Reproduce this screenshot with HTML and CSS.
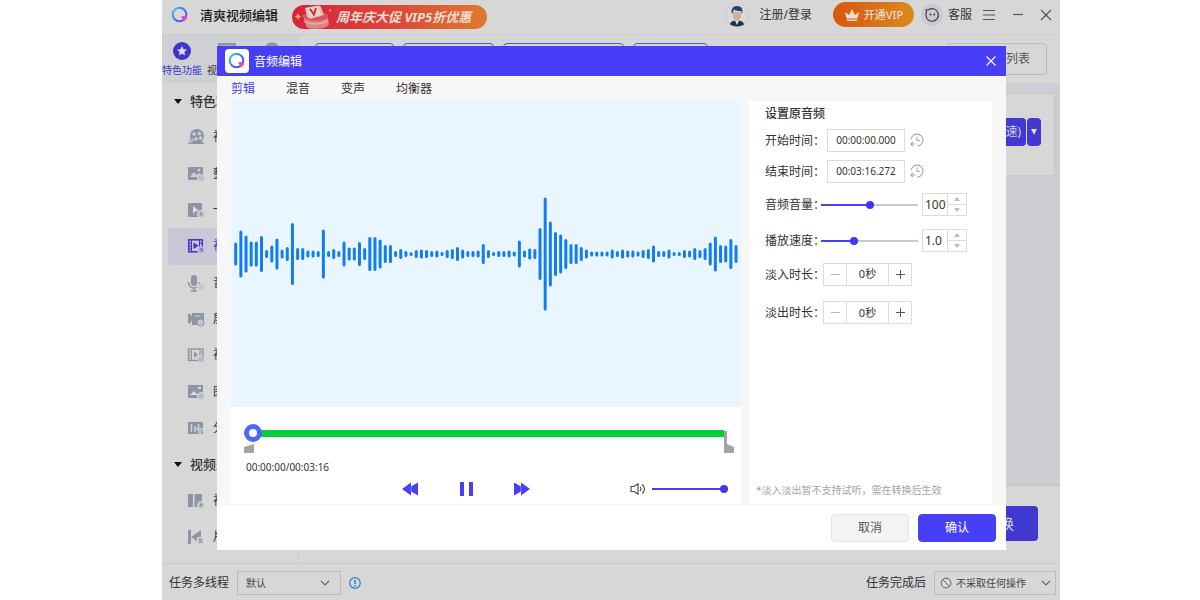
FILE: index.html
```html
<!DOCTYPE html>
<html lang="zh-CN">
<head>
<meta charset="utf-8">
<title>清爽视频编辑</title>
<link rel="stylesheet" href="styles.css">
</head>
<body>
<svg class="defs" width="0" height="0" aria-hidden="true">
  <defs>
    <linearGradient id="ring" x1="0" y1="0" x2="1" y2="1">
      <stop offset="0" stop-color="#3fd0f5"/><stop offset=".5" stop-color="#3f74f2"/><stop offset="1" stop-color="#7a3df0"/>
    </linearGradient>
    <linearGradient id="flare" x1="0" y1="0" x2="1" y2="1">
      <stop offset="0" stop-color="#6a4df5"/><stop offset=".6" stop-color="#ff4fa0"/><stop offset="1" stop-color="#ffb0cf"/>
    </linearGradient>
    <symbol id="logo" viewBox="0 0 18 18">
      <circle cx="8.5" cy="8.5" r="6.8" fill="none" stroke="url(#ring)" stroke-width="2"/>
      <path d="M10 10.500l4.500-.5 2 2-3.500 4c-.5-1.500-1.500-3.500-3-5.500z" fill="url(#flare)"/>
    </symbol>
    <symbol id="chevron" viewBox="0 0 10 6"><path d="M1 1l4 4 4-4" fill="none" stroke="#666" stroke-width="1.1"/></symbol>
    <symbol id="history" viewBox="0 0 14 14">
      <path d="M1.200 6.200A5.900 5.900 0 1 1 7.500 12.900M7 3.500v4h3M5.500 11H.8M2.800 9L.8 11l2 2" fill="none" stroke="#a9a9a9" stroke-width="1.100"/>
    </symbol>
  </defs>
</svg>
<div class="app">
  <header class="topbar">
    <svg class="logo" width="18" height="18"><use href="#logo"/></svg>
    <h1 class="brand">清爽视频编辑</h1>
    <a class="promo" href="#">
      <svg width="40" height="26" viewBox="0 0 40 26">
        <path d="M11 11l24-1 2 10c-1 5-20 7-23 2z" fill="#dd8487"/>
        <ellipse cx="24" cy="12.500" rx="12" ry="4.500" fill="#d8545b"/>
        <path d="M12 17c5 4 18 4 24-1" fill="none" stroke="#e9aeb0" stroke-width="1.500"/>
        <path d="M13 4l13-2.500c2 0 3 1 3.500 3L32 11l-14 4-3-2z" fill="#e4bcb2"/>
        <path d="M14 4l12-2 3 9-11 2.500z" fill="#e6d2cb"/>
        <path d="M18 5l4 5.500L24 4" fill="none" stroke="#c9252f" stroke-width="1.800"/>
        <path d="M6 9l1 2.500 2.500 1L7 13.500 6 16l-1-2.500-2.500-1L5 11.500zM38 5l1 1.500-1 1.500-1-1.500z" fill="#e8b45c"/>
      </svg>
      <span>周年庆大促 VIP5折优惠</span>
    </a>
    <div class="account">
      <a class="login" href="#">
        <svg width="24" height="24" viewBox="0 0 24 24">
          <circle cx="12" cy="12" r="11.500" fill="#d9d9d9" stroke="#c9cacc"/>
          <path d="M8 9h8v4c0 2-1.500 4.500-4 4.500S8 15 8 13z" fill="#d3ae98"/>
          <path d="M7 11c-1.500-5 1-8 5-8 4.500 0 6.500 3 5 8l-1-3c-3 0-6-.5-7-1.500z" fill="#25426b"/>
          <path d="M5 21.500c.5-3 3-3.500 5-4l2 2 2-2c2 .5 4.500 1 5 4-4 2.500-10 2.500-14 0z" fill="#1f3050"/>
          <path d="M10 17.500l2 4.500 2-4.500-2 1.500z" fill="#e8eef6"/>
        </svg>
        <span>注册/登录</span>
      </a>
      <button class="vip" type="button">
        <svg width="16" height="14" viewBox="0 0 16 14"><path d="M1 4l4 3 3-6 3 6 4-3-1.500 6.500h-11zM3 11.500h10V13H3z" fill="#ecdcd2"/></svg>
        开通VIP
      </button>
      <a class="support" href="#">
        <svg width="22" height="22" viewBox="0 0 22 22">
          <circle cx="11" cy="11" r="11" fill="#c9cacf"/>
          <path d="M5.500 5.500l2 .3A6.300 6.300 0 1 1 5.300 8.500zM5.200 5l.3 4" fill="none" stroke="#40434c" stroke-width="1.200"/>
          <circle cx="9.500" cy="10.500" r="1" fill="#40434c"/><circle cx="13.200" cy="10.500" r="1" fill="#40434c"/>
        </svg>
        <span>客服</span>
      </a>
      <div class="window-tools">
        <button type="button" aria-label="菜单"><svg width="14" height="12" viewBox="0 0 14 12"><path d="M1 1.500h12M1 6h12M1 10.500h12" stroke="#555" stroke-width="1.200"/></svg></button>
        <button type="button" aria-label="最小化"><svg width="12" height="12" viewBox="0 0 12 12"><path d="M1 5.500h10" stroke="#555" stroke-width="1.200"/></svg></button>
        <button type="button" aria-label="关闭"><svg width="12" height="12" viewBox="0 0 12 12"><path d="M1 1l10 10M11 1L1 11" stroke="#555" stroke-width="1.200"/></svg></button>
      </div>
    </div>
  </header>

  <div class="workspace">
    <aside class="sidebar">
      <nav class="modes">
        <a class="mode mode-on" href="#">
          <svg width="18" height="18" viewBox="0 0 18 18"><circle cx="9" cy="9" r="9" fill="#3d35c9"/><path d="M9 4l1.500 3.200 3.500.4-2.600 2.400.7 3.500L9 11.800l-3.100 1.700.7-3.500L4 7.600l3.500-.4z" fill="#d9d9e8"/></svg>
          <span>特色功能</span>
        </a>
        <a class="mode" href="#">
          <svg width="18" height="18" viewBox="0 0 18 18"><rect y="1" width="18" height="16" rx="1" fill="#8f95a6"/><path d="M3 4h12" stroke="#c5c8d0"/></svg>
          <span>视频处理</span>
        </a>
        <a class="mode" href="#" aria-label="音频处理">
          <svg width="18" height="18" viewBox="0 0 18 18"><circle cx="9" cy="9" r="8.500" fill="#8f95a6"/></svg>
        </a>
      </nav>
      <ul class="features">
        <li class="group"><span class="caret"></span>特色功能</li>
        <li><a href="#"><svg width="18" height="18" viewBox="0 0 18 18"><g fill="#8d94a6"><circle cx="10" cy="8" r="7"/><path d="M1 16c1-5 4-6 7-5l8 3 1 2z"/></g><g fill="#d0d1d5"><circle cx="7" cy="6" r="1.700"/><circle cx="12.500" cy="5.500" r="1.700"/><circle cx="13.500" cy="10" r="1.700"/><circle cx="9" cy="11" r="1.700"/></g><path d="M2 15l5-4" stroke="#c3c6ce" stroke-width="2"/></svg>视频美化</a></li>
        <li><a href="#"><svg width="18" height="18" viewBox="0 0 18 18"><rect x="1" y="2" width="15" height="13" rx="1" fill="#8d94a6"/><path d="M3 12l4-5 3 3 2-2 3 4z" fill="#d0d1d5"/><circle cx="12" cy="5" r="1.500" fill="#d0d1d5"/><circle cx="14" cy="13" r="3.500" fill="#b9bdc8" stroke="#d7d7d7"/></svg>整理图片</a></li>
        <li><a href="#"><svg width="18" height="18" viewBox="0 0 18 18"><rect x="1" y="2" width="14" height="14" rx="1" fill="#8d94a6"/><path d="M6 5l6 5-4 .5L6 13z" fill="#dcdde0"/><circle cx="14" cy="13" r="3.500" fill="#b9bdc8" stroke="#d7d7d7"/><path d="M13 11l2.500 2-2.500 2z" fill="#8d94a6"/></svg>一键成片</a></li>
        <li class="current"><a href="#"><svg width="18" height="18" viewBox="0 0 18 18"><rect x="1.800" y="2.800" width="13.500" height="12" fill="none" stroke="#3d35c0" stroke-width="1.500"/><path d="M4.500 3v12M12.500 3v7M2 6h2M2 9h2M2 12h2M13 6h2" stroke="#3d35c0"/><path d="M6.500 5.500l5 3.300-5 3.300z" fill="#3d35c0"/><circle cx="14" cy="13" r="3.500" fill="#aaa4dc" stroke="#ccc8dc"/><path d="M14 11v2h2" fill="none" stroke="#574fc4"/></svg>视频编辑</a></li>
        <li><a href="#"><svg width="18" height="18" viewBox="0 0 18 18"><rect x="4" y="1" width="6" height="11" rx="3" fill="#8d94a6"/><path d="M1.500 8c0 8 11 8 11 0M7 14v3M4 17h6" fill="none" stroke="#8d94a6" stroke-width="1.500"/><circle cx="14" cy="13" r="3.500" fill="#c5c8cf" stroke="#d7d7d7"/></svg>音频编辑</a></li>
        <li><a href="#"><svg width="18" height="18" viewBox="0 0 18 18"><path d="M5 3h12v12H5zM1 4h3v9H1z" fill="#8d94a6"/><path d="M4 6h2v5H4z" fill="#8d94a6"/><path d="M7.500 6h6" stroke="#c9cbd2" stroke-width="1.200"/><circle cx="13.500" cy="12.500" r="3.500" fill="#c5c8cf" stroke="#8d94a6"/></svg>屏幕录像</a></li>
        <li><a href="#"><svg width="18" height="18" viewBox="0 0 18 18"><rect x="1.500" y="3" width="14.500" height="11.500" fill="none" stroke="#8d94a6" stroke-width="1.400"/><path d="M4.500 3v12M13 3v7M2 6h2M2 9h2M2 12h2M13 6h2" stroke="#8d94a6"/><path d="M7 5.500l4 3.200-4 3.200z" fill="#8d94a6"/><rect x="11" y="11" width="6" height="5" fill="#b9bdc8"/></svg>视频转换</a></li>
        <li><a href="#"><svg width="18" height="18" viewBox="0 0 18 18"><rect x="1" y="2" width="15" height="13" rx="1" fill="#8d94a6"/><path d="M3 12l4-4 3 3 2-1 3 2z" fill="#dcdde0"/><path d="M11 5h3" stroke="#dcdde0" stroke-width="2"/><circle cx="14" cy="13" r="3.500" fill="#b9bdc8" stroke="#d7d7d7"/></svg>图片转换</a></li>
        <li><a href="#"><svg width="18" height="18" viewBox="0 0 18 18"><rect x="1" y="3" width="15" height="12" rx="1" fill="#8d94a6"/><path d="M4.500 5v8M8 7v6M11.500 5v6" stroke="#d0d1d5" stroke-width="1.500"/><path d="M9 9.500h8l-3 3.500v3h-2v-3z" fill="#b2b6c2" stroke="#d7d7d7" stroke-width=".8"/></svg>分离音频</a></li>
        <li class="group"><span class="caret"></span>视频处理</li>
        <li><a href="#"><svg width="18" height="18" viewBox="0 0 18 18"><path d="M1 2h5v13H1zM7.500 2H15v13H7.500z" fill="#8d94a6"/><circle cx="14" cy="13" r="3.500" fill="#b9bdc8" stroke="#d7d7d7"/><path d="M13 11l2.500 2-2.500 2z" fill="#8d94a6"/></svg>视频分割</a></li>
        <li><a href="#"><svg width="18" height="18" viewBox="0 0 18 18"><path d="M1 2h3v14H1zM14 2v14L4 9z" fill="#8d94a6"/><rect x="10.500" y="9.500" width="6" height="6.500" fill="#b9bdc8" stroke="#d7d7d7"/><path d="M12 11.500h3M12 13.500h3" stroke="#8d94a6"/></svg>片头片尾</a></li>
      </ul>
    </aside>
    <main class="content">
      <div class="toolbar">
        <button class="outline w-a" type="button">添加文件</button>
        <button class="outline w-b" type="button">添加文件夹</button>
        <button class="outline w-c" type="button">添加视频素材</button>
        <button class="outline w-d" type="button">清空</button>
        <button class="outline queue" type="button">转换列表</button>
      </div>
      <div class="files">
        <div class="file-card">
          <button class="solid" type="button">转换(加速)</button>
          <button class="solid solid-menu" type="button" aria-label="更多"><span class="caret"></span></button>
        </div>
      </div>
      <div class="start-row"><button class="solid start" type="button">转换</button></div>
    </main>
  </div>

  <footer class="statusbar">
    <label for="threads">任务多线程</label>
    <div class="picker threads">
      <select id="threads"><option>默认</option></select>
      <svg width="10" height="6"><use href="#chevron"/></svg>
    </div>
    <svg width="12" height="12" viewBox="0 0 12 12"><circle cx="6" cy="6" r="5.300" fill="none" stroke="#2f7bd6" stroke-width="1.200"/><path d="M6 2.800v4.200M6 8v1.400" stroke="#2f7bd6" stroke-width="1.500"/></svg>
    <label class="after-label" for="after">任务完成后</label>
    <div class="picker after">
      <svg width="12" height="12" viewBox="0 0 12 12"><circle cx="6" cy="6" r="4.900" fill="none" stroke="#666"/><path d="M2.500 2.500l7 7" stroke="#666"/></svg>
      <select id="after"><option>不采取任何操作</option></select>
      <svg width="10" height="6"><use href="#chevron"/></svg>
    </div>
  </footer>

  <section class="dialog" role="dialog" aria-labelledby="dialog-title">
    <div class="dialog-head">
      <span class="badge"><svg width="18" height="18"><use href="#logo"/></svg></span>
      <h2 id="dialog-title">音频编辑</h2>
      <button type="button" aria-label="关闭"><svg width="10" height="10" viewBox="0 0 10 10"><path d="M.5.5l9 9M9.500.5l-9 9" stroke="#fff" stroke-width="1.100"/></svg></button>
    </div>
    <div class="dialog-body">
      <nav class="tabs">
        <a class="tab-on" href="#">剪辑</a><a href="#">混音</a><a href="#">变声</a><a href="#">均衡器</a>
      </nav>
      <div class="panes">
        <div class="editor">
          <div class="wave"><svg viewBox="0 0 510 306" aria-label="波形"><path id="bars" d=""/></svg></div>
          <div class="player">
            <div class="timeline">
              <input class="seek" type="range" min="0" max="196" value="0" aria-label="播放进度">
              <svg width="10" height="22" viewBox="0 0 10 22"><path d="M0 0h3v13l7 3v6H0z" fill="#a3a3a3"/></svg>
              <svg class="trim-start" width="10" height="9" viewBox="0 0 10 9"><path d="M0 3l10-3v9H0z" fill="#a3a3a3"/></svg>
            </div>
            <p class="clock">00:00:00/00:03:16</p>
            <div class="controls">
              <div class="transport">
                <button type="button" aria-label="后退"><svg width="16" height="14" viewBox="0 0 16 14"><path d="M0 7l9-6.500v4l7-4v13l-7-4v4z" fill="#473ff5"/><path d="M9 4v6" stroke="#8d88fa" stroke-width=".8"/></svg></button>
                <button type="button" aria-label="暂停"><svg width="16" height="14" viewBox="0 0 16 14"><path d="M2 0h4v14H2zM11 0h4v14h-4z" fill="#473ff5"/></svg></button>
                <button type="button" aria-label="前进"><svg width="16" height="14" viewBox="0 0 16 14"><path d="M16 7L7 .5v4L0 .5v13l7-4v4z" fill="#473ff5"/><path d="M7 4v6" stroke="#8d88fa" stroke-width=".8"/></svg></button>
              </div>
              <div class="volume">
                <svg width="16" height="12" viewBox="0 0 16 12"><path d="M1 3.500h3L8 .8v10.400L4 8.500H1zM10 3.800c1.300 1.300 1.300 3.100 0 4.400M12.200 1.500c3 2.800 3 6.200 0 9" fill="none" stroke="#444" stroke-width="1.100"/></svg>
                <input class="slider" type="range" value="100" style="--fill:100%" aria-label="音量">
              </div>
            </div>
          </div>
        </div>
        <form class="settings">
          <h3>设置原音频</h3>
          <div class="row"><label for="t0">开始时间：</label><input class="time" id="t0" type="text" value="00:00:00.000"><button class="bare" type="button" aria-label="重置开始时间"><svg width="14" height="14"><use href="#history"/></svg></button></div>
          <div class="row"><label for="t1">结束时间：</label><input class="time" id="t1" type="text" value="00:03:16.272"><button class="bare" type="button" aria-label="重置结束时间"><svg width="14" height="14"><use href="#history"/></svg></button></div>
          <div class="row row-tall"><label for="vol">音频音量：</label><input class="slider" id="vol" type="range" value="50" style="--fill:50%"><span class="spin"><input type="text" value="100" aria-label="音量数值"><span class="steps"><button type="button" aria-label="增加"></button><button class="down" type="button" aria-label="减少"></button></span></span></div>
          <div class="row row-tall"><label for="spd">播放速度：</label><input class="slider" id="spd" type="range" value="33" style="--fill:34%"><span class="spin"><input type="text" value="1.0" aria-label="速度数值"><span class="steps"><button type="button" aria-label="增加"></button><button class="down" type="button" aria-label="减少"></button></span></span></div>
          <div class="row"><label for="fin">淡入时长：</label><span class="stepper"><button type="button" class="off" aria-label="减少"><svg width="9" height="9" viewBox="0 0 9 9"><path d="M0 4.500h9" stroke="#bbb"/></svg></button><input id="fin" type="text" value="0秒"><button type="button" aria-label="增加"><svg width="9" height="9" viewBox="0 0 9 9"><path d="M0 4.500h9M4.500 0v9" stroke="#555"/></svg></button></span></div>
          <div class="row row-last"><label for="fout">淡出时长：</label><span class="stepper"><button type="button" class="off" aria-label="减少"><svg width="9" height="9" viewBox="0 0 9 9"><path d="M0 4.500h9" stroke="#bbb"/></svg></button><input id="fout" type="text" value="0秒"><button type="button" aria-label="增加"><svg width="9" height="9" viewBox="0 0 9 9"><path d="M0 4.500h9M4.500 0v9" stroke="#555"/></svg></button></span></div>
          <p class="hint">*淡入淡出暂不支持试听，需在转换后生效</p>
        </form>
      </div>
    </div>
    <div class="dialog-foot">
      <button class="cancel" type="button">取消</button>
      <button class="confirm" type="button">确认</button>
    </div>
  </section>
</div>
<script src="script.js"></script>
</body>
</html>
```
FILE: styles.css
```css
* { box-sizing: border-box; }
body {
  margin: 0;
  background: #fff;
  color: #333;
  font: 12px/16px "Noto Sans", "Noto Sans CJK SC", sans-serif;
}
h1, h2, h3, p, ul { margin: 0; padding: 0; }
a { color: inherit; text-decoration: none; }
button, input, select { font: inherit; color: inherit; margin: 0; padding: 0; border: 0; background: none; border-radius: 0; min-width: 0; }
button { display: flex; align-items: center; justify-content: center; white-space: nowrap; }
svg { display: block; flex: none; }
.defs { position: absolute; }

.app {
  position: relative;
  display: flex;
  flex-direction: column;
  min-height: 100vh;
  margin: 0 140px 0 162px;
  background: #d7d7d7;
}

/* top bar */
.topbar {
  display: flex;
  align-items: center;
  height: 35px;
  padding: 0 8px 5px 9px;
  border-bottom: 1px solid #cdcdcf;
}
.brand { margin: 0 14px 0 11px; font-size: 13px; font-weight: 500; color: #1c1c1c; }
.promo {
  display: flex;
  align-items: center;
  gap: 4px;
  width: 195px;
  height: 24px;
  margin-top: 4px;
  border-radius: 12px;
  background: linear-gradient(90deg, #d8223c, #dc4a38 55%, #dc7b2e);
  color: #f0dcd4;
  font: italic bold 13px/24px "Noto Sans", "Noto Sans CJK SC", sans-serif;
  white-space: nowrap;
}
.account { display: flex; align-items: center; margin-left: auto; white-space: nowrap; }
.login { display: flex; align-items: center; gap: 11px; margin-right: 21px; }
.vip {
  gap: 4px;
  width: 81px;
  height: 25px;
  margin-right: 7px;
  border-radius: 13px;
  background: linear-gradient(90deg, #d9560f, #dc8a1c);
  color: #eeddd0;
  font-size: 11px;
  font-weight: 500;
}
.support { display: flex; align-items: center; gap: 5px; margin-right: 10px; }
.window-tools { display: flex; align-items: center; gap: 16px; }

/* workspace */
.workspace { display: flex; flex: 1; }
.sidebar { display: flex; flex-direction: column; width: 137px; border-right: 1px solid #cbccd2; }
.modes { display: flex; gap: 5px; height: 48px; padding-top: 7px; background: #cfd0d3; }
.mode { display: flex; flex-direction: column; align-items: center; gap: 4px; width: 40px; font-size: 10px; line-height: 12px; white-space: nowrap; }
.mode-on { color: #3d35c9; }
.features { display: flex; flex: 1; flex-direction: column; padding: 0 0 8px 6px; list-style: none; }
.features li { display: flex; flex: 1; align-items: center; white-space: nowrap; }
.features a { display: flex; align-items: center; gap: 8px; padding-left: 19px; }
.features .group { gap: 8px; padding-left: 6px; font-size: 13px; font-weight: 500; }
.features .current { border-radius: 4px 0 0 4px; background: linear-gradient(90deg, #c8c5d5, #d3ccd3); color: #3d35c0; }
.caret { border: 4px solid transparent; border-top: 5px solid #111; border-bottom: 0; }

.content { display: flex; flex: 1; flex-direction: column; min-width: 0; }
.toolbar { display: flex; gap: 9px; height: 48px; padding: 8px 13px 8px 16px; }
.outline { border: 1px solid #5a55c4; border-radius: 4px; color: #3d35c9; }
.w-a { width: 79px; }
.w-b { width: 91px; }
.w-c { width: 121px; }
.w-d { width: 75px; }
.queue { justify-content: flex-end; width: 101px; margin-left: auto; padding-right: 16px; border-color: #b9bac8; color: #555; }
.files { flex: 1; padding: 10px 5px 10px 10px; background: #cdced1; border-bottom: 1px solid #c4c5c8; }
.file-card { display: flex; justify-content: flex-end; gap: 1px; height: 83px; padding: 24px 13px; border: 1px solid #c7c8cc; background: #d7d7d7; }
.solid { width: 90px; height: 28px; justify-content: flex-end; padding-right: 5px; border-radius: 4px; background: #4038cf; color: #d5d3ee; }
.solid-menu { justify-content: center; width: 14px; padding: 0; }
.solid-menu .caret { border-width: 6px 3px 0; border-top-color: #e0e0ee; }
.start-row { display: flex; justify-content: flex-end; height: 77px; padding: 20px 22px; }
.start { width: 80px; height: 35px; padding-right: 24px; font-size: 14px; }

/* status bar */
.statusbar { display: flex; align-items: center; height: 37px; padding: 2px 4px 0 7px; border-top: 1px solid #cacaca; white-space: nowrap; }
.picker { display: flex; align-items: center; height: 24px; padding: 0 10px 0 8px; border: 1px solid #bcbcbc; color: #444; font-size: 10px; }
.picker select { flex: 1; appearance: none; outline: 0; }
.threads { width: 104px; margin: 0 8px; }
.after-label { margin-left: auto; }
.after { width: 122px; margin-left: 8px; padding: 0 4px 0 5px; gap: 4px; }

/* dialog */
.dialog {
  position: absolute;
  inset: 46px 54px 50px 55px;
  display: flex;
  flex-direction: column;
  background: #fff;
}
.dialog-head { display: flex; align-items: center; gap: 5px; height: 30px; padding: 0 10px 0 8px; background: #473ff8; color: #fff; }
.dialog-head h2 { padding-top: 2px; font-size: 12px; font-weight: 400; }
.dialog-head button { margin-left: auto; }
.badge { display: flex; align-items: center; justify-content: center; width: 24px; height: 24px; border-radius: 4px; background: #fff; }
.dialog-body { display: flex; flex: 1; flex-direction: column; padding: 0 14px 1px 14px; background: #f7f7f7; }
.tabs { display: flex; gap: 31px; height: 25px; line-height: 25px; }
.tab-on { color: #473ff8; }
.panes { display: flex; flex: 1; gap: 8px; }
.editor { display: flex; flex: 1; flex-direction: column; min-width: 0; }
.wave { flex: 1; display: flex; align-items: center; background: #e9f6ff; }
.wave svg { width: 100%; }
#bars { fill: none; stroke: #137df0; stroke-width: 3; stroke-linecap: round; }

.player { height: 97px; padding: 18px 7px 0 13px; background: #fff; }
.timeline { position: relative; z-index: 0; display: flex; height: 28px; padding-top: 6px; }
.seek { flex: 1; height: 18px; margin-top: -6px; appearance: none; outline: 0; }
.seek::-webkit-slider-runnable-track { height: 7px; background: linear-gradient(90deg, transparent 9px, #06cf38 9px); }
.seek::-webkit-slider-thumb { appearance: none; width: 18px; height: 18px; margin-top: -6px; border: 5px solid #4a68fb; border-radius: 50%; background: #fff; }
.trim-start { position: absolute; left: 0; bottom: 0; z-index: -1; }
.clock { padding: 6px 0 7px 2px; font-size: 10px; color: #333; }
.controls { display: flex; justify-content: space-between; padding-right: 6px; }
.transport { display: flex; gap: 40px; padding-left: 158px; }
.volume { display: flex; align-items: center; gap: 6px; }
.volume .slider { width: 76px; }

.slider { width: 97px; height: 14px; appearance: none; outline: 0; }
.slider::-webkit-slider-runnable-track { height: 2px; background: linear-gradient(90deg, #473ff5 var(--fill), #c9c9c9 var(--fill)); }
.slider::-webkit-slider-thumb { appearance: none; width: 8px; height: 8px; margin-top: -3px; border-radius: 50%; background: #3f37f2; }

.settings { display: flex; flex-direction: column; width: 243px; padding: 5px 10px 6px 16px; background: #fff; }
.settings h3 { margin-bottom: 3px; font-size: 12px; font-weight: 500; line-height: 16px; }
.row { display: flex; align-items: center; height: 31px; }
.row label { width: 56px; padding-top: 1px; white-space: nowrap; }
.row-tall { height: 36px; }
.row-last { height: 46px; }
.time { width: 78px; height: 23px; margin-left: 6px; border: 1px solid #dcdcdc; font-size: 10px; text-align: center; }
.bare { margin-left: 5px; }
.spin { display: flex; width: 45px; height: 23px; margin-left: 4px; border: 1px solid #dcdcdc; }
.spin input { width: 25px; padding-left: 2px; border-right: 1px solid #dcdcdc; }
.steps { display: flex; flex: 1; flex-direction: column; }
.steps button { flex: 1; }
.steps button::before { content: ""; border: 3px solid transparent; border-top: 0; border-bottom: 4px solid #bbb; }
.steps .down { border-top: 1px solid #dcdcdc; }
.steps .down::before { border-bottom: 0; border-top: 4px solid #bbb; }
.stepper { display: flex; width: 89px; height: 23px; margin-left: 2px; border: 1px solid #dcdcdc; }
.stepper button { width: 22px; }
.stepper input { flex: 1; width: 40px; border: 1px solid #dcdcdc; border-width: 0 1px; font-size: 11px; text-align: center; }
.hint { margin: auto 0 0 -9px; font-size: 10px; color: #a3a3a3; white-space: nowrap; }

.dialog-foot { display: flex; align-items: center; justify-content: flex-end; gap: 9px; height: 46px; padding: 2px 10px 0; }
.dialog-foot button { width: 78px; height: 28px; border: 1px solid #e4e4e4; border-radius: 4px; background: #f3f3f3; color: #555; }
.dialog-foot .confirm { border-color: #473ff8; background: #473ff8; color: #fff; }
```
FILE: script.js
```js
// Peak height of every bar, left to right, in viewBox units.
const peaks = [
  23, 47, 37, 25, 25, 36, 8, 17, 31, 9, 14, 62, 12, 12, 7, 7, 6, 49, 6, 10, 6, 25, 13, 13, 24,
  12, 34, 34, 29, 18, 18, 6, 10, 6, 4, 8, 9, 8, 6, 7, 4, 8, 10, 14, 9, 6, 6, 7, 20, 8,
  4, 6, 6, 7, 5, 27, 7, 11, 10, 52, 113, 65, 44, 39, 30, 20, 20, 14, 9, 5, 5, 5, 5, 9, 6,
  9, 7, 7, 5, 8, 10, 17, 6, 6, 9, 4, 4, 8, 7, 12, 8, 12, 23, 35, 18, 17, 30, 18
];
const step = 5.158;
document.getElementById("bars").setAttribute("d", peaks.map((h, i) => {
  const x = (4.7 + i * step).toFixed(2);
  const half = (h - 3) / 2;
  return `M${x} ${153 - half}V${153 + half}`;
}).join(""));
```
